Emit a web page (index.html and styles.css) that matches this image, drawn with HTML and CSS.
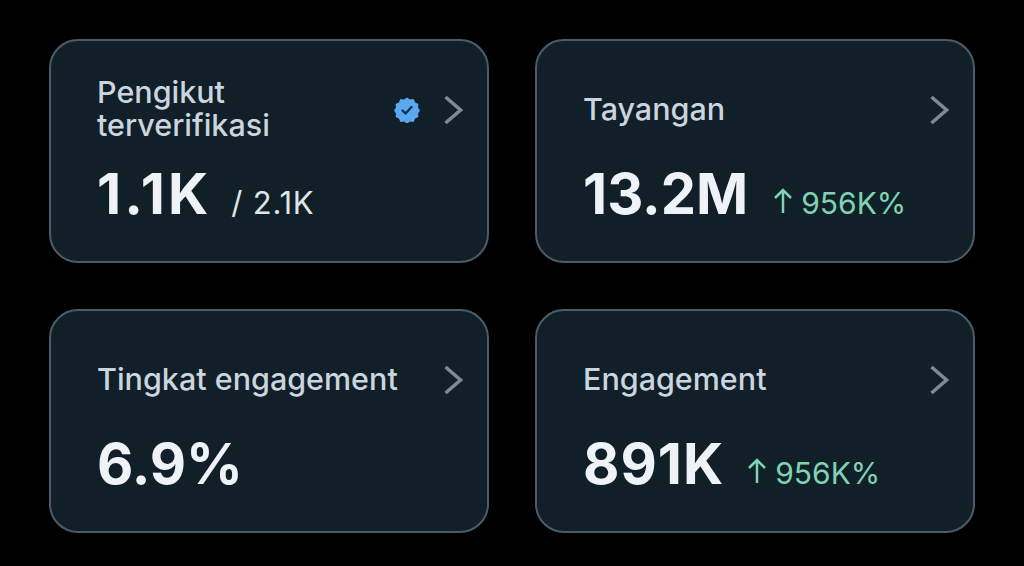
FILE: index.html
```html
<!DOCTYPE html>
<html lang="id">
<head>
<meta charset="utf-8">
<title>Statistik</title>
<link rel="stylesheet" href="styles.css">
</head>
<body>
<main class="grid">
  <section class="card">
    <div class="head">
      <div class="label">Pengikut<br>terverifikasi</div>
      <svg class="badge" viewBox="0 0 26 26" aria-hidden="true">
        <path class="badge-fill" d="M13 .5l3 2 3.600-.4 1.500 3.300 3.300 1.500-.4 3.600 2 3-2 3 .4 3.600-3.300 1.500-1.500 3.300-3.600-.4-3 2-3-2-3.600.4-1.500-3.300-3.300-1.500.4-3.600-2-3 2-3-.4-3.600 3.300-1.500 1.500-3.300 3.600.4z"/>
        <path class="badge-check" d="M8.500 13.500l3 3 6-6.500"/>
      </svg>
      <svg class="chev" viewBox="0 0 20 30" aria-hidden="true"><path d="M2.500 2l15 13-15 13"/></svg>
    </div>
    <div class="stats">
      <span class="value value-airy">1.1K</span>
      <span class="sub">/ 2.1K</span>
    </div>
  </section>
  <section class="card">
    <div class="head">
      <div class="label">Tayangan</div>
      <svg class="chev" viewBox="0 0 20 30" aria-hidden="true"><path d="M2.500 2l15 13-15 13"/></svg>
    </div>
    <div class="stats">
      <span class="value">13.2M</span>
      <span class="delta"><svg class="arrow" viewBox="0 0 20 26" aria-hidden="true"><path d="M10 25V2M2 10l8-8 8 8"/></svg>956K%</span>
    </div>
  </section>
  <section class="card">
    <div class="head">
      <div class="label">Tingkat engagement</div>
      <svg class="chev" viewBox="0 0 20 30" aria-hidden="true"><path d="M2.500 2l15 13-15 13"/></svg>
    </div>
    <div class="stats">
      <span class="value">6.9%</span>
    </div>
  </section>
  <section class="card">
    <div class="head">
      <div class="label">Engagement</div>
      <svg class="chev" viewBox="0 0 20 30" aria-hidden="true"><path d="M2.500 2l15 13-15 13"/></svg>
    </div>
    <div class="stats">
      <span class="value value-loose">891K</span>
      <span class="delta"><svg class="arrow" viewBox="0 0 20 26" aria-hidden="true"><path d="M10 25V2M2 10l8-8 8 8"/></svg>956K%</span>
    </div>
  </section>
</main>
</body>
</html>
```
FILE: styles.css
```css
* { box-sizing: border-box; }
html, body { margin: 0; height: 100%; background: #000; }
body { font-family: Inter, "Liberation Sans", Arial, sans-serif; overflow: hidden; }
.grid {
  display: grid;
  grid-template-columns: 440px 440px;
  grid-template-rows: 224px 224px;
  gap: 46px 46px;
  padding: 39px 49px;
}
.card {
  background: #111f28;
  border: 2px solid #4b5c68;
  border-radius: 29px;
  padding: 0 24px 0 46px;
  display: flex;
  flex-direction: column;
}
.head {
  height: 100px;
  padding-top: 34px;
  display: flex;
  align-items: center;
  gap: 24px;
}
.label {
  flex: 1;
  font-size: 30.500px;
  font-weight: 500;
  line-height: 33px;
  color: #cbd5df;
}
.badge { width: 26px; height: 26px; flex: none; margin: 4px -1px 0 0; }
.badge-fill { fill: #5aa8f2; }
.badge-check { fill: none; stroke: #12304d; stroke-width: 2.400; stroke-linecap: round; stroke-linejoin: round; }
.chev { width: 20px; height: 30px; flex: none; margin-top: 4px; }
.chev path { fill: none; stroke: #7d8a94; stroke-width: 3.500; }
.stats {
  display: flex;
  align-items: baseline;
  margin-top: 18px;
  height: 70px;
}
.value {
  font-size: 56px;
  line-height: 70px;
  font-weight: 700;
  color: #eff2f6;
}
.value-airy { letter-spacing: 3px; }
.value-loose { letter-spacing: 1px; }
.sub {
  margin-left: 20px;
  font-size: 31px;
  letter-spacing: .8px;
  color: #dfe4e9;
}
.delta {
  margin-left: 25px;
  font-size: 30px;
  color: #7fd3b3;
  display: inline-flex;
  align-items: baseline;
  gap: 8px;
}
.value-loose + .delta { margin-left: 23px; }
.arrow { width: 20px; height: 26px; margin-bottom: -1px; }
.arrow path { fill: none; stroke: #7fd3b3; stroke-width: 2.500; }
```
